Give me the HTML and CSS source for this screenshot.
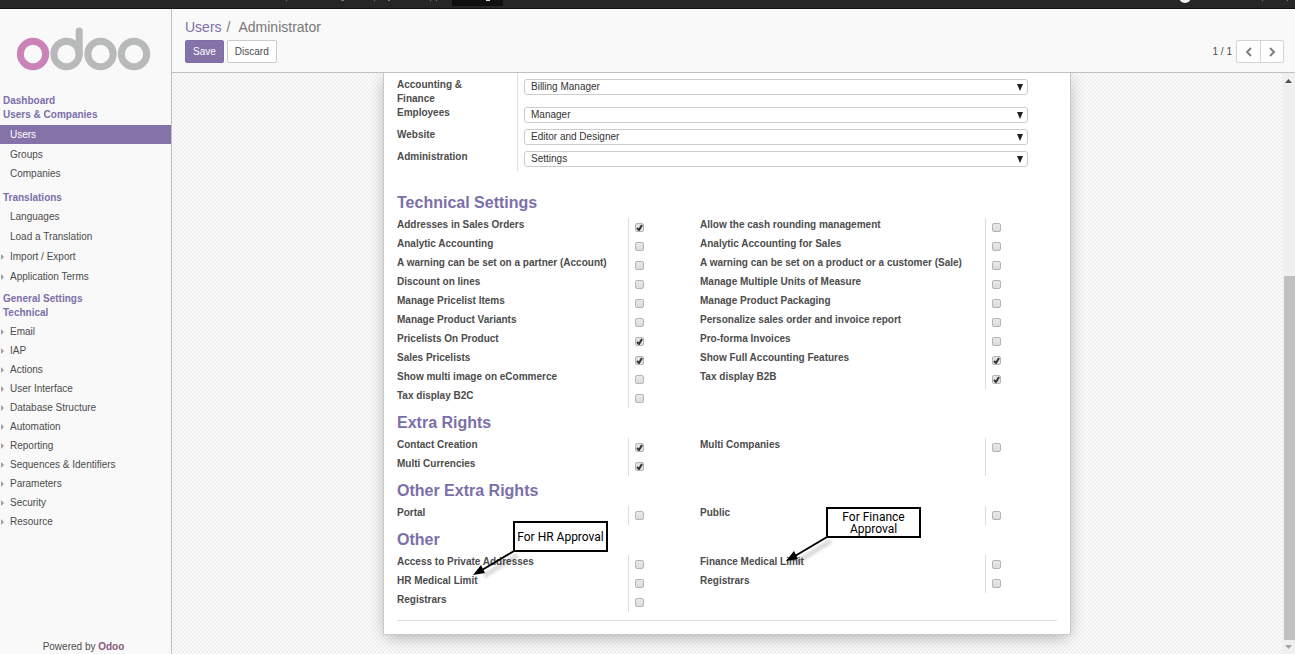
FILE: index.html
```html
<!DOCTYPE html>
<html lang="en">
<head>
<meta charset="utf-8">
<title>Administrator - Odoo</title>
<link rel="stylesheet" href="styles.css">
</head>
<body>
<header class="navbar">
  <svg class="navbar-items" viewBox="0 0 520 9" width="520" height="9" aria-hidden="true">
    <rect x="452" width="51" height="6" fill="#0f0f0f"/>
    <path d="M286 0h1v1h-1zM341 0h3v1h-3zM374 0h1v1h-1zM388 0h2v1h-2zM430 0h1v1h-1zM436 0h1v1h-1z" fill="#77797c"/>
    <path d="M486 0h4v1h-4z" fill="#ddd"/>
  </svg>
  <svg class="navbar-user" viewBox="0 0 120 9" width="120" height="9" aria-hidden="true">
    <circle cx="10" cy="-3" r="6" fill="#f2f2f2"/>
    <path d="M87 0h1v1h-1zM112 0h1v1h-1z" fill="#77797c"/>
  </svg>
</header>
<div class="main">
  <aside class="sidebar">
    <a class="logo" href="#" aria-label="odoo">
      <svg viewBox="0 0 134 46" width="134" height="46" fill="none" stroke="#b8bab9" stroke-width="7">
        <circle cx="16" cy="27" r="12.700" stroke="#ca82b7"/>
        <circle cx="49.500" cy="27" r="12.700"/>
        <path d="M62.200 27V4" stroke-linecap="round"/>
        <circle cx="83.500" cy="27" r="12.700"/>
        <circle cx="117" cy="27" r="12.700"/>
      </svg>
    </a>
    <nav class="menu">
      <h2>Dashboard</h2>
      <h2>Users &amp; Companies</h2>
      <ul class="spaced">
        <li class="active"><a href="#">Users</a></li>
        <li><a href="#">Groups</a></li>
        <li><a href="#">Companies</a></li>
      </ul>
      <h2>Translations</h2>
      <ul class="roomy">
        <li><a href="#">Languages</a></li>
        <li><a href="#">Load a Translation</a></li>
        <li class="parent"><a href="#">Import / Export</a></li>
        <li class="parent"><a href="#">Application Terms</a></li>
      </ul>
      <h2>General Settings</h2>
      <h2>Technical</h2>
      <ul>
        <li class="parent"><a href="#">Email</a></li>
        <li class="parent"><a href="#">IAP</a></li>
        <li class="parent"><a href="#">Actions</a></li>
        <li class="parent"><a href="#">User Interface</a></li>
        <li class="parent"><a href="#">Database Structure</a></li>
        <li class="parent"><a href="#">Automation</a></li>
        <li class="parent"><a href="#">Reporting</a></li>
        <li class="parent"><a href="#">Sequences &amp; Identifiers</a></li>
        <li class="parent"><a href="#">Parameters</a></li>
        <li class="parent"><a href="#">Security</a></li>
        <li class="parent"><a href="#">Resource</a></li>
      </ul>
    </nav>
    <footer class="powered">Powered by <a href="#">Odoo</a></footer>
  </aside>
  <div class="content">
    <div class="control-panel">
      <div class="breadcrumb"><a href="#">Users</a><span class="slash">/</span><span>Administrator</span></div>
      <div class="toolbar">
        <button class="btn primary" type="button">Save</button>
        <button class="btn" type="button">Discard</button>
        <div class="pager">
          <span>1 / 1</span>
          <div class="pager-buttons">
            <button type="button" aria-label="Previous"><svg viewBox="0 0 8 10" width="8" height="10"><path d="M6 1L2 5l4 4" /></svg></button>
            <button type="button" aria-label="Next"><svg viewBox="0 0 8 10" width="8" height="10"><path d="M2 1l4 4-4 4" /></svg></button>
          </div>
        </div>
      </div>
    </div>
    <div class="view">
      <div class="scroll-area">
        <form class="sheet">
          <div class="apps">
            <label for="s1">Accounting &amp; Finance</label><div class="cell"><select id="s1"><option>Billing Manager</option></select></div>
            <label for="s2">Employees</label><div class="cell"><select id="s2"><option>Manager</option></select></div>
            <label for="s3">Website</label><div class="cell"><select id="s3"><option>Editor and Designer</option></select></div>
            <label for="s4">Administration</label><div class="cell"><select id="s4"><option>Settings</option></select></div>
          </div>
          <h3>Technical Settings</h3>
          <div class="groups">
            <div class="group">
              <label for="a1">Addresses in Sales Orders</label><div class="cell"><input type="checkbox" id="a1" checked></div>
              <label for="a2">Analytic Accounting</label><div class="cell"><input type="checkbox" id="a2"></div>
              <label for="a3">A warning can be set on a partner (Account)</label><div class="cell"><input type="checkbox" id="a3"></div>
              <label for="a4">Discount on lines</label><div class="cell"><input type="checkbox" id="a4"></div>
              <label for="a5">Manage Pricelist Items</label><div class="cell"><input type="checkbox" id="a5"></div>
              <label for="a6">Manage Product Variants</label><div class="cell"><input type="checkbox" id="a6"></div>
              <label for="a7">Pricelists On Product</label><div class="cell"><input type="checkbox" id="a7" checked></div>
              <label for="a8">Sales Pricelists</label><div class="cell"><input type="checkbox" id="a8" checked></div>
              <label for="a9">Show multi image on eCommerce</label><div class="cell"><input type="checkbox" id="a9"></div>
              <label for="a10">Tax display B2C</label><div class="cell"><input type="checkbox" id="a10"></div>
            </div>
            <div class="group wide">
              <label for="b1">Allow the cash rounding management</label><div class="cell"><input type="checkbox" id="b1"></div>
              <label for="b2">Analytic Accounting for Sales</label><div class="cell"><input type="checkbox" id="b2"></div>
              <label for="b3">A warning can be set on a product or a customer (Sale)</label><div class="cell"><input type="checkbox" id="b3"></div>
              <label for="b4">Manage Multiple Units of Measure</label><div class="cell"><input type="checkbox" id="b4"></div>
              <label for="b5">Manage Product Packaging</label><div class="cell"><input type="checkbox" id="b5"></div>
              <label for="b6">Personalize sales order and invoice report</label><div class="cell"><input type="checkbox" id="b6"></div>
              <label for="b7">Pro-forma Invoices</label><div class="cell"><input type="checkbox" id="b7"></div>
              <label for="b8">Show Full Accounting Features</label><div class="cell"><input type="checkbox" id="b8" checked></div>
              <label for="b9">Tax display B2B</label><div class="cell"><input type="checkbox" id="b9" checked></div>
            </div>
          </div>
          <h3>Extra Rights</h3>
          <div class="groups">
            <div class="group">
              <label for="c1">Contact Creation</label><div class="cell"><input type="checkbox" id="c1" checked></div>
              <label for="c2">Multi Currencies</label><div class="cell"><input type="checkbox" id="c2" checked></div>
            </div>
            <div class="group wide">
              <label for="d1">Multi Companies</label><div class="cell"><input type="checkbox" id="d1"></div>
              <span></span><div class="cell"></div>
            </div>
          </div>
          <h3>Other Extra Rights</h3>
          <div class="groups">
            <div class="group">
              <label for="e1">Portal</label><div class="cell"><input type="checkbox" id="e1"></div>
            </div>
            <div class="group wide">
              <label for="f1">Public</label><div class="cell"><input type="checkbox" id="f1"></div>
            </div>
          </div>
          <h3>Other</h3>
          <div class="groups">
            <div class="group">
              <label for="g1">Access to Private Addresses</label><div class="cell"><input type="checkbox" id="g1"></div>
              <label for="g2">HR Medical Limit</label><div class="cell"><input type="checkbox" id="g2"></div>
              <label for="g3">Registrars</label><div class="cell"><input type="checkbox" id="g3"></div>
            </div>
            <div class="group wide">
              <label for="h1">Finance Medical Limit</label><div class="cell"><input type="checkbox" id="h1"></div>
              <label for="h2">Registrars</label><div class="cell"><input type="checkbox" id="h2"></div>
            </div>
          </div>
          <hr>
          <div class="note note-hr">For HR Approval
            <svg class="arrow" viewBox="0 0 50 36" width="50" height="36" aria-hidden="true"><path class="shadow" d="M46 8L12 29"/><path class="line" d="M42 4L10 23"/><path class="head" d="M1 28l8-10 4 8z"/></svg>
          </div>
          <div class="note note-finance">For Finance Approval
            <svg class="arrow" viewBox="0 0 50 36" width="50" height="36" aria-hidden="true"><path class="shadow" d="M46 8L12 29"/><path class="line" d="M42 4L10 23"/><path class="head" d="M1 28l8-10 4 8z"/></svg>
          </div>
        </form>
      </div>
      <div class="scrollbar" aria-hidden="true">
        <svg viewBox="0 0 7 4" width="7" height="4"><path d="M0 4L3.500 0 7 4z" fill="#505050"/></svg>
        <div class="track"><div class="thumb"></div></div>
        <svg viewBox="0 0 7 4" width="7" height="4"><path d="M0 0h7L3.500 4z" fill="#a3a3a3"/></svg>
      </div>
    </div>
  </div>
</div>
</body>
</html>
```

FILE: styles.css
```css
* { box-sizing: border-box; }
body {
  margin: 0;
  height: 100vh;
  display: flex;
  flex-direction: column;
  overflow: hidden;
  font: 10px/14px "Liberation Sans", Arial, sans-serif;
  color: #4c4c4c;
}
a { color: inherit; text-decoration: none; }
button, select { font: inherit; color: inherit; }

.navbar {
  height: 9px;
  flex: none;
  display: flex;
  justify-content: space-between;
  background: #262626;
  border-bottom: 1px solid #111;
}
.main { flex: 1; min-height: 0; display: flex; }

.sidebar {
  width: 172px;
  flex: none;
  display: flex;
  flex-direction: column;
  background: #f9f9f9;
  border-right: 1px solid #c0c0c0;
}
.logo { padding: 18px 0 0 17px; height: 85px; }
.logo svg { display: block; }
.menu { flex: 1; }
.menu h2 {
  margin: 0;
  padding-left: 3px;
  font-size: 10px;
  line-height: 14px;
  color: #7c6fa9;
}
.menu ul { list-style: none; margin: 0; padding: 2px 0 5px; }
.menu li { padding: 0 10px; line-height: 19px; }
.menu .roomy li { line-height: 20px; }
.menu .spaced { padding: 3px 0 8px; }
.menu .spaced .active { background: #8472a9; color: #fff; margin-bottom: 1px; }
.menu .parent { display: flex; align-items: center; gap: 6px; padding-left: 1px; }
.menu .parent::before {
  content: "";
  border-left: 3px solid #a0a0a0;
  border-top: 3px solid transparent;
  border-bottom: 3px solid transparent;
}
.powered { text-align: center; padding-right: 4px; }
.powered a { color: #875a7b; font-weight: bold; }

.content { flex: 1; min-width: 0; display: flex; flex-direction: column; }
.control-panel {
  height: 64px;
  flex: none;
  padding: 9px 11px 0 13px;
  background: #f9f9f9;
  border-bottom: 1px solid #c0c0c0;
}
.breadcrumb { font-size: 14px; line-height: 18px; color: #777; }
.breadcrumb a { color: #7c6fa9; }
.slash { margin: 0 8px 0 5px; }
.toolbar { display: flex; align-items: center; gap: 3px; padding-top: 4px; }
.btn {
  height: 23px;
  padding: 0 7px;
  border: 1px solid #ccc;
  border-radius: 2px;
  background: #fff;
}
.primary { background: #8472a9; border-color: #7c6fa9; color: #fff; }
.pager { margin-left: auto; display: flex; align-items: center; gap: 4px; }
.pager-buttons { display: flex; border: 1px solid #d4d4d4; border-radius: 2px; background: #fff; }
.pager-buttons button {
  width: 23px;
  height: 21px;
  padding: 0;
  border: 0;
  background: none;
  display: grid;
  place-items: center;
}
.pager-buttons button + button { border-left: 1px solid #d4d4d4; }
.pager-buttons path { fill: none; stroke: #808080; stroke-width: 2; }

.view { flex: 1; min-height: 0; display: flex; }
.scroll-area {
  flex: 1;
  overflow: hidden;
  background: repeating-conic-gradient(#fbfbfb 0 25%, #f0f0f0 0 50%) 0 0 / 4px 4px;
}
.sheet {
  position: relative;
  max-width: 688px;
  margin: 0 auto;
  padding: 0 13px 13px;
  background: #fff;
  border: 1px solid #c8c8d3;
  border-top: 0;
  box-shadow: 0 4px 16px -3px #0005;
}
.sheet label { font-weight: bold; }
.sheet h3 { margin: 0; font-size: 16px; line-height: 30px; color: #7c6fa9; }
.cell { border-left: 1px solid #ddd; padding-left: 6px; }
.apps {
  display: grid;
  grid-template-columns: 120fr 540fr;
  grid-template-rows: 32px 22px 22px 22px;
  padding-bottom: 17px;
}
.apps label { padding-top: 1px; }
.apps .cell { padding: 2px 29px 0 6px; }
.apps label:first-child { width: 90px; padding-top: 5px; }
.apps label:first-child + .cell { padding-top: 6px; }
.apps select {
  display: block;
  width: 100%;
  height: 16px;
  padding: 0 6px;
  border: 1px solid #ccc;
  border-radius: 3px;
  appearance: none;
  color: #333;
  background: #fff url("data:image/svg+xml,%3Csvg xmlns='http://www.w3.org/2000/svg' width='6' height='7'%3E%3Cpath d='M0 0h6L3 7z' fill='%23222'/%3E%3C/svg%3E") no-repeat right 4px center;
}
.groups { display: grid; grid-template-columns: 303fr 357fr; align-items: start; }
.group { display: grid; grid-template-columns: 231fr 72fr; grid-auto-rows: 19px; }
.wide { grid-template-columns: 285fr 72fr; }
.group label { white-space: nowrap; }
.group input {
  appearance: none;
  display: block;
  width: 9px;
  height: 9px;
  margin: 5px 0 0;
  border: 1px solid #b4b4b4;
  border-radius: 2px;
  background: linear-gradient(#e9e9e9, #dcdcdc);
}
.group input:checked {
  background: #e2e2e2 url("data:image/svg+xml,%3Csvg xmlns='http://www.w3.org/2000/svg' width='7' height='7'%3E%3Cpath d='M1 4l2 2 3-5' fill='none' stroke='%23333' stroke-width='2'/%3E%3C/svg%3E") no-repeat center;
}
hr { margin: 8px 0 0; border: 0; border-top: 1px solid #ddd; }

/* Callouts drawn over the form */
.note {
  position: absolute;
  width: 95px;
  height: 31px;
  display: grid;
  place-items: center;
  border: 2px solid #000;
  background: #fff;
  color: #000;
  font: 12px/12px Roboto, sans-serif;
  text-align: center;
}
.note-hr { left: 129px; bottom: 82px; }
.note-finance { left: 442px; bottom: 96px; }
.arrow { position: absolute; left: -43px; top: 24px; }
.arrow .line { stroke: #000; stroke-width: 2; }
.arrow .shadow { stroke: #0002; stroke-width: 5; filter: blur(1px); }

.scrollbar {
  width: 13px;
  flex: none;
  display: flex;
  flex-direction: column;
  align-items: center;
  padding: 6px 0 5px;
  gap: 5px;
  background: #f0f0f0;
}
.track { flex: 1; width: 100%; padding-left: 2px; display: flex; flex-direction: column; justify-content: flex-end; }
.thumb { height: 66%; background: #c0c0c0; }
```
